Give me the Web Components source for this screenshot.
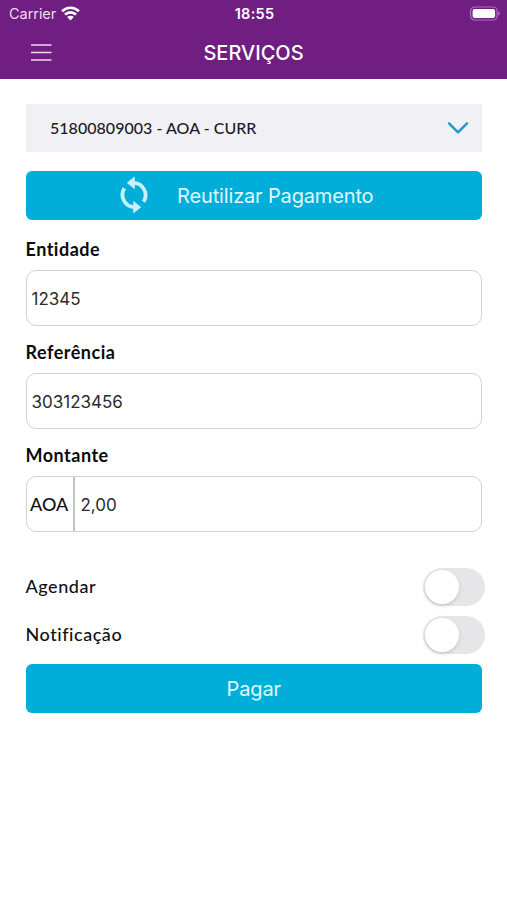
<!DOCTYPE html>
<html lang="pt">
<head>
<meta charset="utf-8">
<meta name="viewport" content="width=device-width, initial-scale=1">
<title>Serviços</title>
<style>
    html, body { margin: 0; height: 100%; background: #fff; overflow: hidden }
    body {
        --purple: #701e82;
        --cyan: #00aeda;
        --ui: Inter, "Liberation Sans", sans-serif;
        --brand: Lato, "Open Sans", sans-serif;
        font-family: var(--brand);
        color: #111;
    }
</style>
</head>
<body>
<payment-page>
    <status-bar slot="top" carrier="Carrier" time="18:55"></status-bar>
    <nav-header slot="top">SERVIÇOS</nav-header>

    <account-select>51800809003 - AOA - CURR</account-select>
    <action-button class="reuse" icon>Reutilizar Pagamento</action-button>
    <form-field label="Entidade" value="12345"></form-field>
    <form-field label="Referência" value="303123456"></form-field>
    <form-field label="Montante" value="2,00" prefix="AOA"></form-field>
    <toggle-row>Agendar</toggle-row>
    <toggle-row>Notificação</toggle-row>
    <action-button>Pagar</action-button>
</payment-page>

<script>
class BaseElement extends HTMLElement {
    constructor() {
        super()
        this.attachShadow({mode: 'open'})
    }

    connectedCallback() {
        const template = document.createElement('template')
        template.innerHTML = this.getTemplate()
        this.shadowRoot.replaceChildren(template.content.cloneNode(true))
    }
}

class PaymentPage extends BaseElement {
    getTemplate() {
        return `
            <style>
                :host { display: block }
                header { height: 79px; background: var(--purple); color: #fff }
                main { display: flex; flex-direction: column; padding: 25px 25px 0 25.5px }
                ::slotted(.reuse) { margin: 18.5px 0 3.5px }
            </style>
            <header><slot name="top"></slot></header>
            <main><slot></slot></main>
        `
    }
}

class StatusBar extends BaseElement {
    getTemplate() {
        return `
            <style>
                :host {
                    display: grid; grid-template-columns: 1fr auto 1fr; align-items: center;
                    height: 27px; padding: 0 7px 0 9px; font: 400 14.5px/27px var(--ui);
                }
                .left { display: flex; align-items: center; gap: 5px; color: #ecdcf0 }
                .left span { letter-spacing: -.05px }
                .time { font-weight: 600; letter-spacing: .25px }
                .battery { justify-self: end }
                svg { display: block }
            </style>
            <div class="left">
                <span>${this.getAttribute('carrier')}</span>
                <svg width="19" height="15" viewBox="0 0 19 15" fill="none" stroke="#fff" stroke-width="2.7">
                    <path d="M1.1 5.2a12 12 0 0 1 16.8 0M4 8.6a7.8 7.8 0 0 1 11 0"/>
                    <path d="M9.5 14.4L6.2 11.1a4.7 4.7 0 0 1 6.6 0z" fill="#fff" stroke="none"/>
                </svg>
            </div>
            <span class="time">${this.getAttribute('time')}</span>
            <svg class="battery" width="31" height="15" viewBox="0 0 31 15">
                <rect x="1.600" y="1" width="26.5" height="13" rx="4" fill="none" stroke="#a973b5" stroke-width="1.2"/>
                <rect x="3.600" y="3" width="22.5" height="9" rx="2" fill="#fff"/>
                <path d="M29.3 5.300q1.6.8 1.600 2.200T29.300 9.700z" fill="#a973b5"/>
            </svg>
        `
    }
}

class NavHeader extends BaseElement {
    getTemplate() {
        return `
            <style>
                :host {
                    display: grid; grid-template-columns: 1fr auto 1fr; align-items: center;
                    height: 50px; padding: 0 31px; font: 550 20px/50px var(--ui);
                }
                svg { display: block }
                span { padding-top: 1px }
            </style>
            <svg width="21" height="18" viewBox="0 0 21 18" stroke="#eed8f2" stroke-width="1.5">
                <path d="M0 1h20.5M0 8.500h20.5M0 16h20.5"/>
            </svg>
            <span><slot></slot></span>
        `
    }
}

class AccountSelect extends BaseElement {
    getTemplate() {
        return `
            <style>
                :host {
                    display: flex; align-items: center; justify-content: space-between;
                    height: 48px; padding: 0 13.5px 0 24.5px; background: #f0f0f5;
                    font-size: 16px; font-weight: 500; letter-spacing: .03px; color: #1c1c1f;
                }
                span { padding-bottom: 2px }
            </style>
            <span><slot></slot></span>
            <svg width="22" height="14" viewBox="0 0 22 14" fill="none" stroke="#1b9ccb" stroke-width="2.4" stroke-linecap="round" stroke-linejoin="round">
                <path d="M2 2.3l9 9 9-9"/>
            </svg>
        `
    }
}

class ActionButton extends BaseElement {
    getTemplate() {
        // two opposite arc arrows
        const icon = `
            <svg width="30" height="38" viewBox="0 0 30 38" fill="none" stroke="#c7f1fb" stroke-width="3.8">
                <path d="M14 6.8a12.4 12.4 0 0 1 10.6 19"/>
                <path d="M16 31.2A12.4 12.4 0 0 1 5.4 12.2"/>
                <path d="M15.8.4v12.8L7.8 6.800zM14.200 37.600V24.800L22.200 31.200z" fill="#c7f1fb" stroke="none"/>
            </svg>`

        return `
            <style>
                :host { display: block }
                button {
                    display: flex; align-items: center; justify-content: center; gap: 28px;
                    width: 100%; height: 49px; padding: 1px 0 0; border: 0; border-radius: 6px;
                    background: var(--cyan); color: #e0f8fd; font: 400 20px/24px var(--ui); letter-spacing: -.15px;
                }
                :host([icon]) button { padding: 0 15px 0 0 }
                :host([icon]) span { padding-top: 2px }
            </style>
            <button>${this.hasAttribute('icon') ? icon : ''}<span><slot></slot></span></button>
        `
    }
}

class FormField extends BaseElement {
    getTemplate() {
        const prefix = this.getAttribute('prefix')

        return `
            <style>
                :host { display: block; margin-top: 14px }
                label {
                    display: block; height: 24px; margin-bottom: 9px;
                    font-size: 18px; line-height: 24px; font-weight: 700; letter-spacing: .5px; color: #0c0c0c;
                }
                .box {
                    display: flex; align-items: center; box-sizing: border-box; height: 56px;
                    border: 1px solid #d3d3d3; border-radius: 10px; background: #fff;
                }
                .prefix {
                    display: flex; align-items: center; box-sizing: border-box; width: 48px; height: 100%;
                    padding-left: 3.5px; border-right: 2px solid #c2c2c2; font-size: 18px; font-weight: 500;
                }
                .value { padding: 1px 0 0 5px; font: 400 17px/24px var(--ui); color: #2b2b2b }
                .prefix + .value { padding-left: 6px }
            </style>
            <label>${this.getAttribute('label')}</label>
            <div class="box">
                ${prefix ? `<span class="prefix">${prefix}</span>` : ''}
                <span class="value">${this.getAttribute('value')}</span>
            </div>
        `
    }
}

class ToggleRow extends BaseElement {
    getTemplate() {
        return `
            <style>
                :host {
                    display: flex; align-items: center; justify-content: space-between;
                    height: 38px; margin: 0 -3px 10px 0; font-size: 18px; font-weight: 500; letter-spacing: .55px;
                }
                :host(:first-of-type) { margin-top: 35.5px }
                span { padding-bottom: 1px }
                .track { display: flex; align-items: center; box-sizing: border-box; width: 62px; height: 38px; padding: 2px; border-radius: 19px; background: #e6e6e8 }
                .knob { width: 34px; height: 34px; border-radius: 50%; background: #fff; box-shadow: 0 2px 4px rgba(0, 0, 0, .13) }
            </style>
            <span><slot></slot></span>
            <div class="track"><div class="knob"></div></div>
        `
    }
}

customElements.define('payment-page', PaymentPage)
customElements.define('status-bar', StatusBar)
customElements.define('nav-header', NavHeader)
customElements.define('account-select', AccountSelect)
customElements.define('action-button', ActionButton)
customElements.define('form-field', FormField)
customElements.define('toggle-row', ToggleRow)
</script>
</body>
</html>
